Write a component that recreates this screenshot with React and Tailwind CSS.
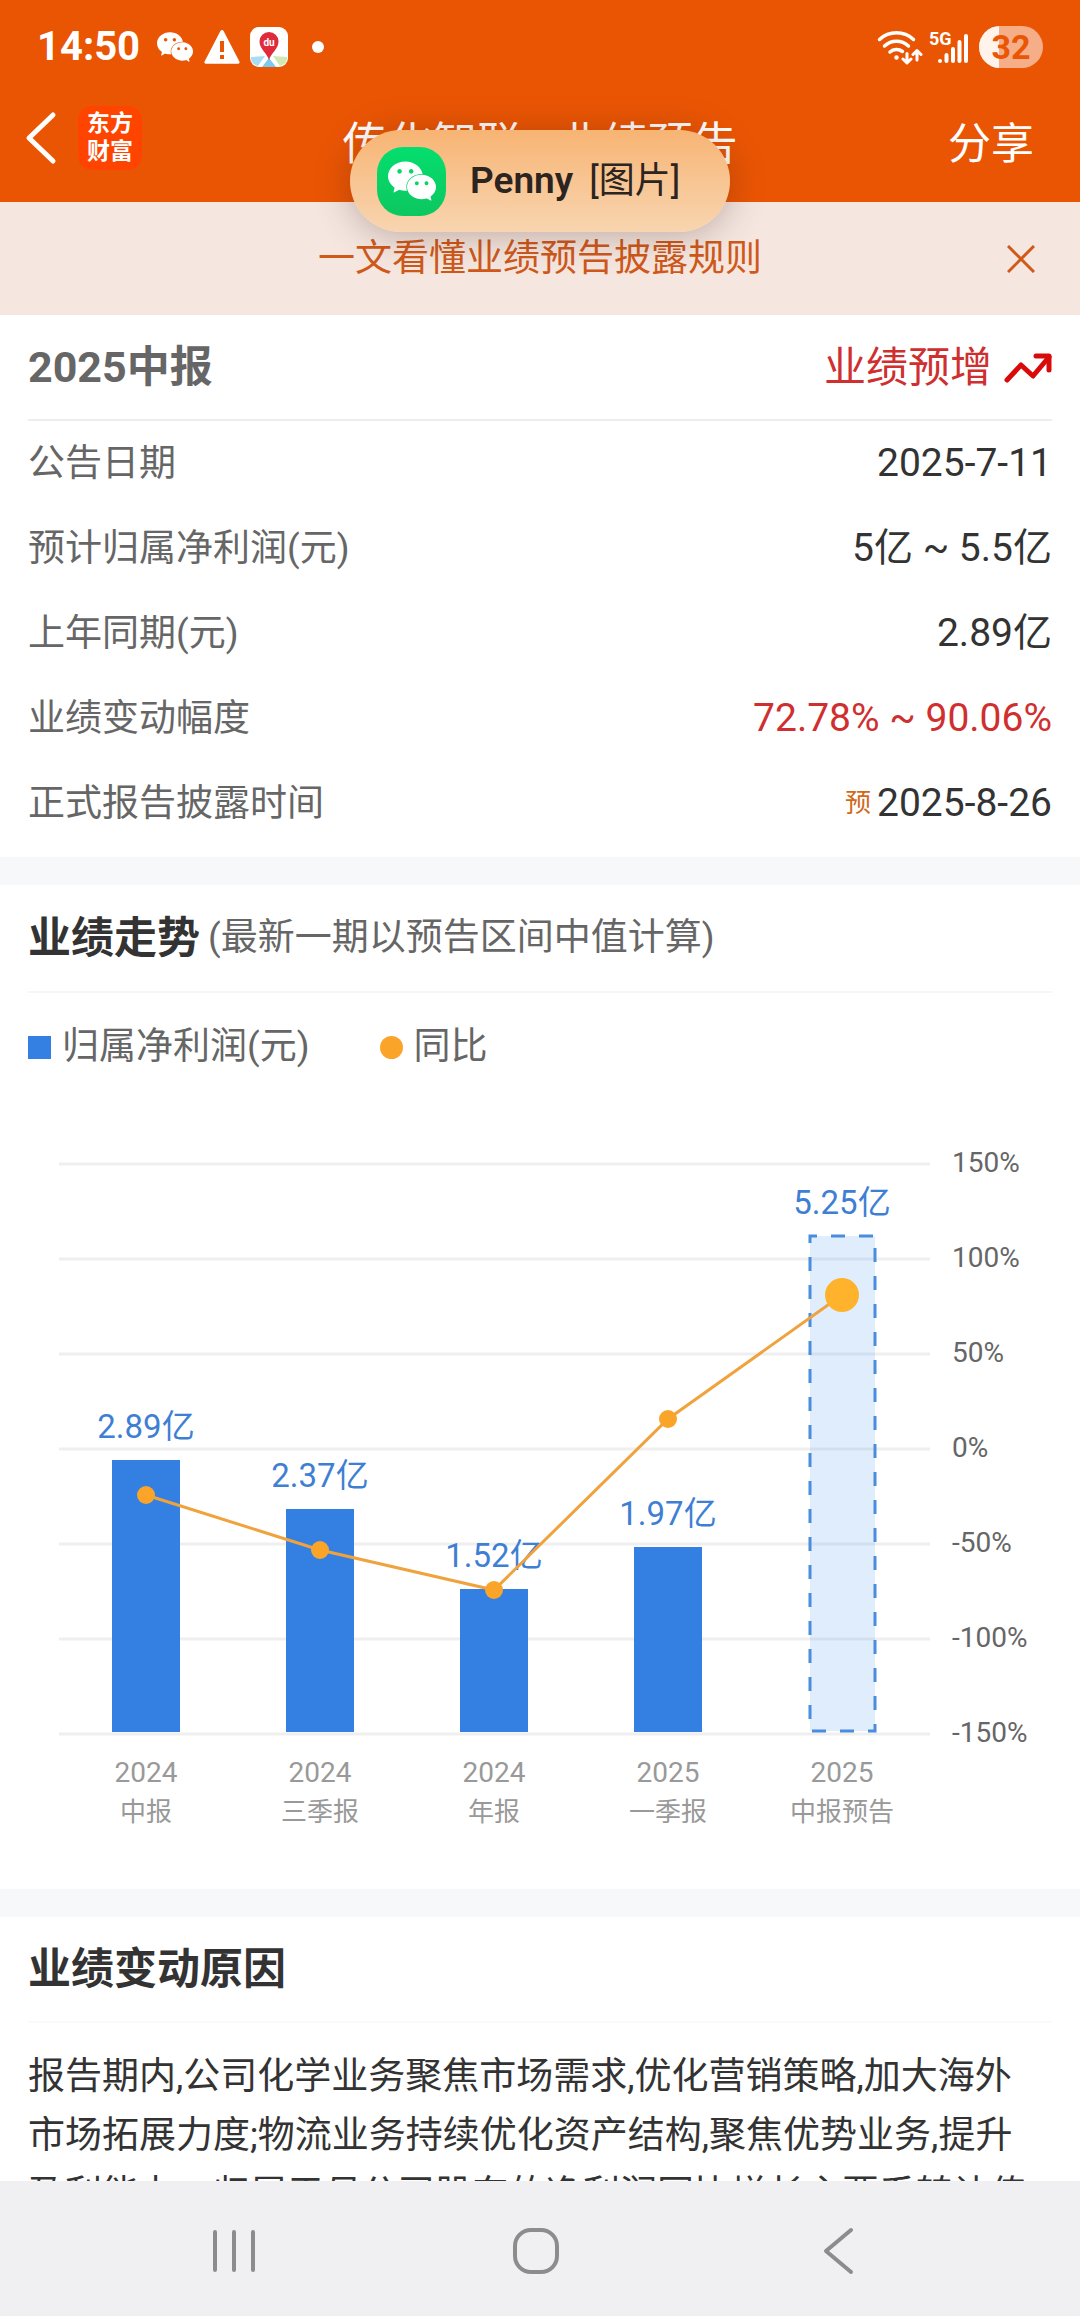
import { SiWechat } from 'react-icons/si';

const summaryRows = [
  { label: '公告日期', value: '2025-7-11' },
  { label: '预计归属净利润(元)', value: '5亿 ~ 5.5亿' },
  { label: '上年同期(元)', value: '2.89亿' },
  { label: '业绩变动幅度', value: '72.78% ~ 90.06%', red: true },
  { label: '正式报告披露时间', value: '2025-8-26', tag: '预' },
];

const periods = [
  { year: '2024', name: '中报', profit: 2.89, rate: -24 },
  { year: '2024', name: '三季报', profit: 2.37, rate: -53 },
  { year: '2024', name: '年报', profit: 1.52, rate: -74 },
  { year: '2025', name: '一季报', profit: 1.97, rate: 16 },
  { year: '2025', name: '中报预告', profit: 5.25, rate: 81, forecast: true },
];

const ticks = [150, 100, 50, 0, -50, -100, -150];

const BASE = 620;
const barHeight = (profit) => Math.round(profit * 94.6);
const rateY = (rate) => Math.round(336 - rate * 1.9);
const centerX = (index) => 146 + index * 174;

function StatusBar() {
  return (
    <div className="flex h-[94px] items-center justify-between px-[37px]">
      <div className="flex items-center text-white">
        <span className="w-[120px] text-[40px] font-bold leading-none">14:50</span>
        <SiWechat className="h-9 w-9" />
        <svg className="ml-[11px] h-[34px] w-9" viewBox="0 0 36 34">
          <path
            fill="currentColor"
            fillRule="evenodd"
            d="M18 0a2 2 0 0 1 1.600 1L35.400 31.500a1.500 1.500 0 0 1-1.300 2.300H1.900A1.500 1.500 0 0 1 .600 31.500L16.400 1A2 2 0 0 1 18 0ZM16 11v11h4V11h-4Zm0 14v4h4v-4h-4Z"
          />
        </svg>
        <svg className="ml-[10px] h-10 w-[38px]" viewBox="0 0 38 40">
          <rect width="38" height="40" rx="9" fill="#fff" />
          <path d="M1 30l14-1-7 10a9 9 0 0 1-7-7Z" fill="#a8dcf5" />
          <path d="M37 30l-14-1 7 10a9 9 0 0 0 7-7Z" fill="#cfe8b4" />
          <path d="M19 31l7 9H12Z" fill="#7cc8ee" />
          <path d="M19 33C17 26 9.500 22 9.500 14.500a9.500 9.500 0 0 1 19 0C28.500 22 21 26 19 33Z" fill="#e02b3c" />
          <text x="19" y="19" textAnchor="middle" fontSize="10" fontWeight="700" fill="#fff">du</text>
        </svg>
        <span className="ml-6 h-3 w-3 rounded-full bg-white" />
      </div>

      <div className="flex items-center text-white">
        <svg className="h-9 w-[46px]" viewBox="0 0 46 36" fill="none" stroke="currentColor" strokeWidth="3.5" strokeLinecap="round">
          <path d="M2.500 10.500a25 25 0 0 1 34 0M7.500 17a17.500 17.500 0 0 1 24 0M13 23a10 10 0 0 1 12.500-.5" />
          <circle cx="19.5" cy="28.5" r="2.2" fill="currentColor" stroke="none" />
          <path d="M30 24.500v9m-4-3.500 4 4 4-4M40 31v-9m-4 3.500 4-4 4 4" strokeWidth="3" strokeLinejoin="round" />
        </svg>
        <svg className="ml-[6px] h-9 w-10" viewBox="0 0 40 36" stroke="currentColor" strokeWidth="4" strokeLinecap="round">
          <text x="0" y="16" fontSize="18" fontWeight="700" fill="currentColor" stroke="none">5G</text>
          <path d="M11 32v.1M17.500 26v6M24 20v12M30.500 13v19M37 7v25" />
        </svg>
        <div className="relative ml-[10px] flex h-[42px] w-16 items-center justify-center overflow-hidden rounded-full bg-[#f6ae88]">
          <span className="absolute inset-y-0 left-0 w-5 bg-[#fff3ec]" />
          <span className="relative text-[34px] font-bold leading-none text-[#ea5604]">32</span>
        </div>
      </div>
    </div>
  );
}

function Header() {
  return (
    <header className="grid h-[108px] grid-cols-[1fr_auto_1fr] items-center pb-2 text-white">
      <div className="flex items-center pb-3 pl-[25px]">
        <button type="button" aria-label="返回">
          <svg className="h-[54px] w-8" viewBox="0 0 32 54" fill="none" stroke="currentColor" strokeWidth="5" strokeLinecap="round" strokeLinejoin="round">
            <path d="M28 4 4 27l24 23" />
          </svg>
        </button>
        <a href="#home" className="ml-[21px] flex h-16 w-16 flex-col items-center justify-center rounded-[14px] bg-[#ff4400] text-[23px] font-bold leading-[28px]">
          <span>东方</span>
          <span>财富</span>
        </a>
      </div>
      <h1 className="text-[45px] leading-none">传化智联—业绩预告</h1>
      <button type="button" className="justify-self-end pr-[46px] text-[43px] leading-none">分享</button>
    </header>
  );
}

function MessagePopup() {
  return (
    <div className="absolute left-1/2 top-[130px] flex h-[102px] w-[380px] -translate-x-1/2 items-center whitespace-nowrap rounded-full bg-linear-to-b from-[#f7b473] to-[#f8d5b0] pl-[27px] text-[#2b2420] shadow-[0_4px_36px_rgba(60,30,20,0.3)]">
      <span className="flex h-[69px] w-[69px] items-center justify-center rounded-[26px] bg-linear-to-b from-[#04de6e] to-[#0cc75f] text-white">
        <SiWechat className="h-12 w-12" />
      </span>
      <span className="ml-6 text-[37px] font-semibold">Penny</span>
      <span className="ml-4 text-[36px]">[图片]</span>
    </div>
  );
}

function Chart() {
  const line = periods.map((p, i) => `${centerX(i)},${rateY(p.rate)}`).join(' ');

  return (
    <svg className="mt-3 block w-full" viewBox="0 0 1080 776">
      {ticks.map((tick) => (
        <g key={tick}>
          <path d={`M59 ${rateY(tick)}H930`} stroke="#efefef" strokeWidth="3" />
          <text x="952" y={rateY(tick) + 8} fontSize="28" fill="#666">{tick}%</text>
        </g>
      ))}

      {periods.map((p, i) => {
        const h = barHeight(p.profit);
        const x = centerX(i);
        return (
          <g key={p.year + p.name} textAnchor="middle">
            {p.forecast ? (
              <rect x={x - 32} y={BASE - h} width="65" height={h - 2} fill="#3b8ef0" fillOpacity="0.16" stroke="#4a8ddd" strokeWidth="3" strokeDasharray="14 14" strokeDashoffset="7" />
            ) : (
              <rect x={x - 34} y={BASE - h} width="68" height={h - 1} fill="#3380e2" />
            )}
            <text x={x} y={BASE - h - 22} fontSize="33" fill="#3f7fd3">{p.profit}亿</text>
            <text x={x} y="669" fontSize="28" fill="#999">{p.year}</text>
            <text x={x} y="708" fontSize="26" fill="#999">{p.name}</text>
          </g>
        );
      })}

      <polyline points={line} fill="none" stroke="#f0a23c" strokeWidth="3" />
      {periods.map((p, i) => (
        <circle
          key={p.year + p.name}
          cx={centerX(i)}
          cy={rateY(p.rate)}
          r={p.forecast ? 17 : 9}
          fill={p.forecast ? '#ffb32c' : '#faa42a'}
        />
      ))}
    </svg>
  );
}

function NavBar() {
  return (
    <nav className="grid h-[135px] shrink-0 grid-cols-3 items-center bg-[#f0f0f2] pl-[83px] pr-[90px] pt-1 text-[#8c8c8c]">
      <button type="button" aria-label="最近任务" className="justify-self-center">
        <svg className="h-12 w-12" viewBox="0 0 48 48" stroke="currentColor" strokeWidth="4" strokeLinecap="round">
          <path d="M5 5v38M24 5v38M43 5v38" />
        </svg>
      </button>
      <button type="button" aria-label="主屏幕" className="justify-self-center">
        <svg className="h-12 w-12" viewBox="0 0 48 48" fill="none" stroke="currentColor" strokeWidth="4">
          <rect x="3" y="3" width="42" height="42" rx="16" />
        </svg>
      </button>
      <button type="button" aria-label="返回" className="justify-self-center">
        <svg className="h-12 w-12" viewBox="0 0 48 48" fill="none" stroke="currentColor" strokeWidth="4" strokeLinecap="round" strokeLinejoin="round">
          <path d="M36 3 11 24l25 21" />
        </svg>
      </button>
    </nav>
  );
}

export default function App() {
  return (
    <div className="relative flex h-screen flex-col overflow-hidden bg-white font-[Roboto,'Noto_Sans_CJK_SC',sans-serif] text-[#333]">
      <div className="shrink-0 bg-[#ea5504]">
        <StatusBar />
        <Header />
      </div>

      <MessagePopup />

      <main className="min-h-0 flex-1 overflow-hidden">
        <div className="grid h-[113px] grid-cols-[118px_1fr_118px] items-center bg-[#f5e7e0] text-[#d0591a]">
          <a href="#rules" className="col-start-2 text-center text-[37px] leading-none">一文看懂业绩预告披露规则</a>
          <button type="button" aria-label="关闭" className="justify-self-center">
            <svg className="h-7 w-7" viewBox="0 0 28 28" stroke="currentColor" strokeWidth="3">
              <path d="M1 1l26 26M27 1 1 27" />
            </svg>
          </button>
        </div>

        {/* Forecast summary */}
        <section className="px-7 pb-[11px]">
          <div className="flex h-[106px] items-center justify-between border-b-2 border-[#ebedee]">
            <h2 className="text-[43px] font-bold text-[#666]">2025中报</h2>
            <div className="flex items-center gap-3 text-[42px] text-[#cf2f2f]">
              <span>业绩预增</span>
              <svg className="h-8 w-12" viewBox="0 0 48 32" fill="none" stroke="#d90a0a" strokeWidth="5" strokeLinecap="round" strokeLinejoin="round">
                <path d="M3 29 17 14l12 11L45 6" />
                <path d="M32 5h13v14" />
              </svg>
            </div>
          </div>
          <dl className="text-[37px]">
            {summaryRows.map((row) => (
              <div key={row.label} className="flex h-[85px] items-center justify-between">
                <dt className="text-[#666]">{row.label}</dt>
                <dd className={`flex items-center gap-1.5 text-[39px] ${row.red ? 'text-[#cf2f2f]' : ''}`}>
                  {row.tag && <span className="text-[26px] text-[#d0691a]">{row.tag}</span>}
                  {row.value}
                </dd>
              </div>
            ))}
          </dl>
        </section>

        {/* Trend chart */}
        <section className="border-t-28 border-[#f7f8fa]">
          <div className="mx-7 flex h-[108px] items-center gap-2 border-b-2 border-[#f5f6f7]">
            <h2 className="text-[43px] font-bold">业绩走势</h2>
            <span className="text-[37px] text-[#666]">(最新一期以预告区间中值计算)</span>
          </div>
          <div className="flex h-[108px] items-center gap-[70px] px-7 text-[37px] text-[#666]">
            <div className="flex items-center gap-[11px]">
              <span className="h-[23px] w-[23px] bg-[#3380e2]" />
              归属净利润(元)
            </div>
            <div className="flex items-center gap-[11px]">
              <span className="h-[23px] w-[23px] rounded-full bg-[#faa42a]" />
              同比
            </div>
          </div>
          <Chart />
        </section>

        {/* Reason for the change */}
        <section className="border-t-28 border-[#f7f8fa]">
          <div className="mx-7 flex h-[106px] items-center border-b-2 border-[#f9fbfb]">
            <h2 className="text-[43px] font-bold">业绩变动原因</h2>
          </div>
          <p className="pl-7 pr-[44px] pt-6 text-[37px] leading-[59px]">
            报告期内,公司化学业务聚焦市场需求,优化营销策略,加大海外市场拓展力度;物流业务持续优化资产结构,聚焦优势业务,提升盈利能力。归属于母公司股东的净利润同比增长主要系转让传
          </p>
        </section>
      </main>

      <NavBar />
    </div>
  );
}
